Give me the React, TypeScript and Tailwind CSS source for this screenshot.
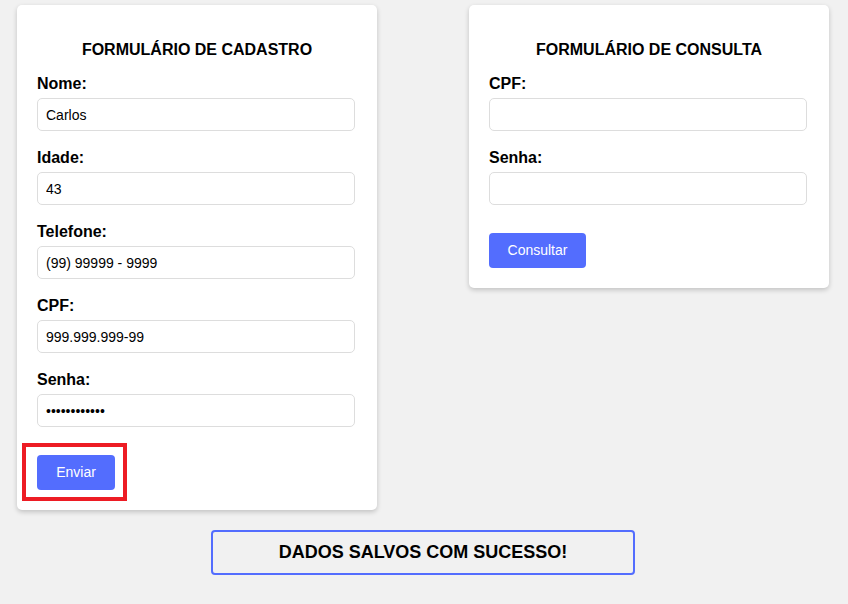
import React from "react";

const font = { fontFamily: '"Liberation Sans", Arial, sans-serif' };

function Field({ label, value, type = "text" }: { label: string; value?: string; type?: string }) {
  return (
    <div className="flex flex-col">
      <label className="block text-[16px] leading-[20px] font-bold text-black pt-[1px] mb-[4px]">{label}</label>
      <input
        type={type}
        defaultValue={value}
        readOnly
        className="w-[318px] h-[33px] rounded-[5px] border border-[#dddddd] bg-white px-[8px] text-[14px] text-black outline-none"
      />
    </div>
  );
}

export default function App() {
  return (
    <div className="min-h-[604px] w-[848px] bg-[#f1f1f1] pt-[5px]" style={font}>
      <div className="flex items-start pl-[17px] gap-[92px]">
        <div className="w-[360px] rounded-[5px] bg-white shadow-[0_2px_5px_rgba(0,0,0,0.2)] px-[20px] pt-[35px] pb-[20px]">
          <h2 className="text-center text-[16px] leading-[19px] font-bold text-black mb-[14px]">FORMULÁRIO DE CADASTRO</h2>
          <div className="flex flex-col gap-[16px]">
            <Field label="Nome:" value="Carlos" />
            <Field label="Idade:" value="43" />
            <Field label="Telefone:" value="(99) 99999 - 9999" />
            <Field label="CPF:" value="999.999.999-99" />
            <Field label="Senha:" value="••••••••••••" />
          </div>
          <div className="relative mt-[28px] w-fit">
            <button className="w-[78px] h-[35px] rounded-[4px] bg-[#536dfe] text-white text-[14px]">Enviar</button>
            <div className="absolute left-[-15px] top-[-12px] w-[105px] h-[58px] border-[4px] border-[#ed1c24] pointer-events-none" />
          </div>
        </div>
        <div className="w-[360px] rounded-[5px] bg-white shadow-[0_2px_5px_rgba(0,0,0,0.2)] px-[20px] pt-[35px] pb-[20px]">
          <h2 className="text-center text-[16px] leading-[19px] font-bold text-black mb-[14px]">FORMULÁRIO DE CONSULTA</h2>
          <div className="flex flex-col gap-[16px]">
            <Field label="CPF:" />
            <Field label="Senha:" type="password" />
          </div>
          <div className="mt-[28px]">
            <button className="w-[97px] h-[35px] rounded-[4px] bg-[#536dfe] text-white text-[14px]">Consultar</button>
          </div>
        </div>
      </div>
      <div className="flex mt-[20px] pl-[211px]">
        <div className="w-[424px] h-[45px] rounded-[4px] border-2 border-[#536dfe] flex items-center justify-center text-[18px] font-bold text-black">
          DADOS SALVOS COM SUCESSO!
        </div>
      </div>
    </div>
  );
}
